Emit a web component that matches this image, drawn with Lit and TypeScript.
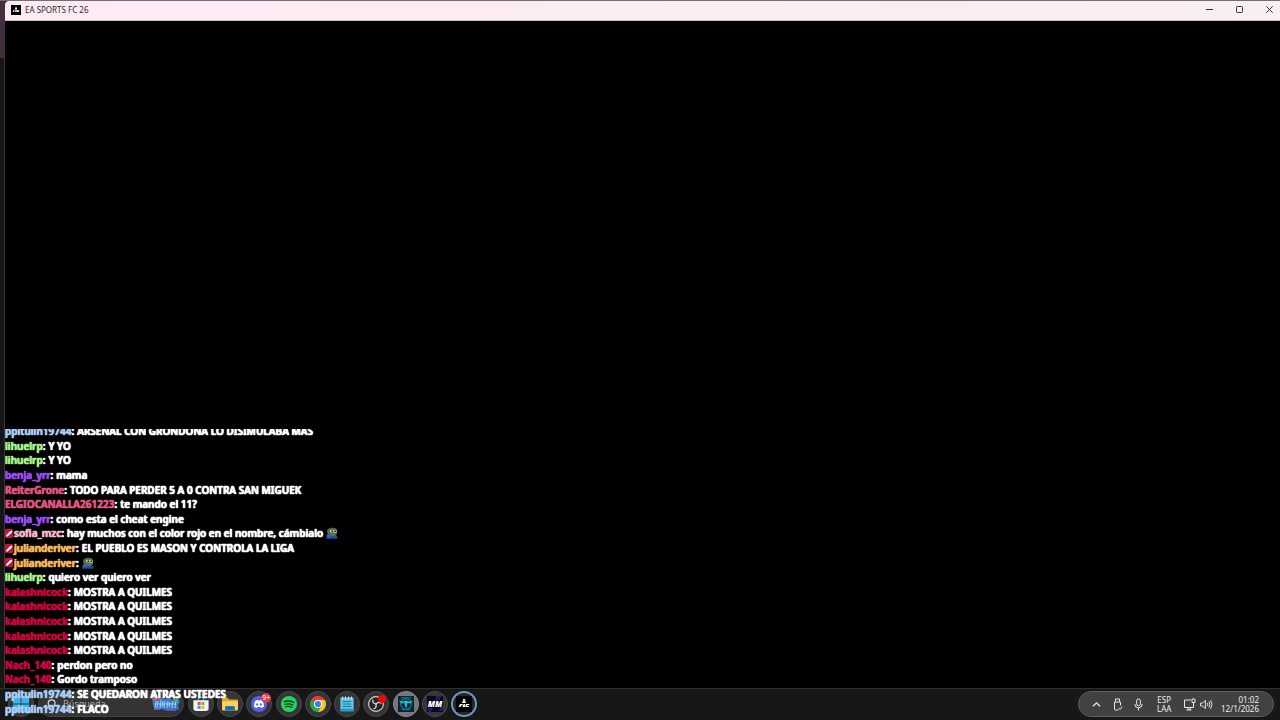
import { LitElement, html, css, svg, nothing } from "lit";
import { customElement } from "lit/decorators.js";

interface Message {
  user: string;
  color: string;
  text: string;
  badge?: boolean;
  emote?: boolean;
}

const BLUE = "#a9cdf5";
const GREEN = "#a4f58a";
const PURPLE = "#9a4df0";
const PINK = "#e0557f";
const RED = "#c9063f";
const ORANGE = "#f5b75c";

const spam: Message = { user: "kalashnicock", color: RED, text: "MOSTRA A QUILMES" };

const messages: Message[] = [
  { user: "ppitulin19744", color: BLUE, text: "ARSENAL CON GRONDONA LO DISIMULABA MAS" },
  { user: "lihuelrp", color: GREEN, text: "Y YO" },
  { user: "lihuelrp", color: GREEN, text: "Y YO" },
  { user: "benja_yrr", color: PURPLE, text: "mama" },
  { user: "ReiterGrone", color: PINK, text: "TODO PARA PERDER 5 A 0 CONTRA SAN MIGUEK" },
  { user: "ELGIOCANALLA261223", color: PINK, text: "te mando el 11?" },
  { user: "benja_yrr", color: PURPLE, text: "como esta el cheat engine" },
  { user: "sofia_mzc", color: "#f3b9c8", text: "hay muchos con el color rojo en el nombre, cámbialo", badge: true, emote: true },
  { user: "julianderiver", color: ORANGE, text: "EL PUEBLO ES MASON Y CONTROLA LA LIGA", badge: true },
  { user: "julianderiver", color: ORANGE, text: "", badge: true, emote: true },
  { user: "lihuelrp", color: GREEN, text: "quiero ver quiero ver" },
  spam, spam, spam, spam, spam,
  { user: "Nach_140", color: RED, text: "perdon pero no" },
  { user: "Nach_140", color: RED, text: "Gordo tramposo" },
  { user: "ppitulin19744", color: BLUE, text: "SE QUEDARON ATRAS USTEDES" },
  { user: "ppitulin19744", color: BLUE, text: "FLACO" },
];

const badge = html`<svg class="badge" viewBox="0 0 9 9" aria-hidden="true">
  <rect width="8" height="9" rx="1" fill="#c8103f" />
  <path d="M1 6.6 L5 2.2 L6.4 1.6 L7.2 2.4 L6.8 3.8 L2.6 7.6 L1.2 7.6 Z" fill="#fff" />
</svg>`;

const emote = html`<svg class="emote" viewBox="0 0 12 12" aria-hidden="true">
  <path d="M.5 11.8 Q0 8.4 2.6 7.6 L10 8.2 Q12 9.2 11.6 11.8 Z" fill="#164fa8" />
  <path d="M1 4.6 Q1.6 1 4.4 1.4 Q5.8 -.2 7.4 1.2 Q10.6 .2 11 3.6 Q12 7.8 8.4 9 Q2 10 1 4.6Z" fill="#4d7440" />
  <path d="M4 3.8 Q5.4 2 7.4 3.4 Q9.4 2 10.8 3.8 L10.2 5.4 Q8.8 6 7.4 5 Q5.4 6.2 4 4.8Z" fill="#d7dfd0" />
  <circle cx="6.2" cy="4.2" r=".9" fill="#141a14" /><circle cx="9.2" cy="4.2" r=".9" fill="#141a14" />
  <path d="M4.4 7.2 Q7.4 8.6 10.4 6.8" stroke="#9a5a42" stroke-width="1" fill="none" />
  <path d="M.6 8 Q2.6 6 4.6 8.4 L4 10.4 L1.2 10.2Z" fill="#2767c9" />
</svg>`;

const gameLogo = svg`
  <rect width="16" height="16" fill="#020202" />
  <path d="M6 7 L6.8 4.6 H9.2 L10 7 Z M7 3 H9.2 V4.2 H7Z" fill="#fff" />
  <path d="M2.6 11 L4 8 H6.8 L6.5 8.9 H5.2 L5 9.4 H6.2 L5.9 10.1 H4.7 L4.3 11Z M6.3 11 L7.6 8 H9.2 L9 11Z M9.4 11 L10 8 H13.6 L13.2 9 H11.4 L11.2 10 H13 L12.7 11Z" fill="#fff" />`;

const apps = [
  {
    name: "Microsoft Store", tone: "",
    icon: svg`<path d="M5.4 4.6 V3 Q5.4 1.4 7 1.4 H9 Q10.6 1.4 10.6 3 V4.6" fill="none" stroke="#38a9e6" stroke-width="1.3" />
      <path d="M.4 4.2 H15.6 V12.6 Q15.6 15 13.2 15 H2.8 Q.4 15 .4 12.6Z" fill="#f1f3f5" />
      <rect x="4.6" y="6" width="3" height="3" fill="#e8502f" /><rect x="8.4" y="6" width="3" height="3" fill="#78b43a" />
      <rect x="4.6" y="9.8" width="3" height="3" fill="#2b9de4" /><rect x="8.4" y="9.8" width="3" height="3" fill="#f5b51f" />`,
  },
  {
    name: "Explorador de archivos", tone: "",
    icon: svg`<path d="M0 2.8 Q0 1.6 1.2 1.6 H5.4 L7.2 3.4 H14.8 Q16 3.4 16 4.6 V9 H0Z" fill="#e2a32b" />
      <path d="M0 5.2 H16 V13.2 Q16 14.4 14.8 14.4 H1.2 Q0 14.4 0 13.2Z" fill="#fbd35c" />
      <path d="M3 14.4 V11.4 Q3 10 4.4 10 H11.6 Q13 10 13 11.4 V14.4Z" fill="#2277bb" />
      <path d="M5.2 12.2 H10.8" stroke="#155a94" stroke-width="1" />`,
  },
  {
    name: "Discord", tone: "", alert: true,
    icon: svg`<circle cx="8" cy="8" r="8" fill="#5661e8" />
      <path d="M4.6 4.6 Q6 3.9 6.8 3.9 L7.1 4.5 H8.9 L9.2 3.9 Q10.6 4.1 11.4 4.6 Q13.2 7.4 13 10.6 Q11.6 11.7 10.2 12 L9.6 10.9 H6.4 L5.8 12 Q4.4 11.7 3 10.6 Q2.8 7.4 4.6 4.6Z" fill="#fff" />
      <ellipse cx="6.2" cy="8.4" rx="1.1" ry="1.2" fill="#5661e8" /><ellipse cx="9.8" cy="8.4" rx="1.1" ry="1.2" fill="#5661e8" />`,
  },
  {
    name: "Spotify", tone: "",
    icon: svg`<circle cx="8" cy="8" r="8" fill="#1ed760" />
      <g fill="none" stroke="#10331c" stroke-linecap="round">
      <path d="M3.4 5.6 Q8.4 4.1 12.8 6.4" stroke-width="1.6" /><path d="M4 8.3 Q8.2 7.1 12 9" stroke-width="1.3" /><path d="M4.4 10.8 Q8 9.8 11.2 11.4" stroke-width="1.1" /></g>`,
  },
  {
    name: "Google Chrome", tone: "",
    icon: svg`<path d="M8 8 L1.07 4 A8 8 0 0 1 14.93 4 Z" fill="#e5402f" />
      <path d="M8 8 L14.93 4 A8 8 0 0 1 8 16 Z" fill="#fbc61c" />
      <path d="M8 8 L8 16 A8 8 0 0 1 1.07 4 Z" fill="#2da44e" />
      <path d="M8 4 H14.93 L11.5 10Z" fill="#fbc61c" /><path d="M1.07 4 L4.5 10 L8 8Z" fill="#2da44e" /><path d="M11.5 10 L8 16 L4.5 10Z" fill="#2da44e" />
      <circle cx="8" cy="8" r="4" fill="#fff" /><circle cx="8" cy="8" r="3.1" fill="#3b7de8" />`,
  },
  {
    name: "Bloc de notas", tone: "",
    icon: svg`<rect x="1.4" y="1.6" width="13.2" height="13.6" rx="1" fill="#63cbe4" />
      <path d="M1.4 12.6 H14.6 V15.2 H1.4Z" fill="#279bc4" />
      <path d="M3.6 .6 V3 M6.5 .6 V3 M9.5 .6 V3 M12.4 .6 V3" stroke="#d9f2f8" stroke-width="1" />
      <path d="M3.6 5.6 H12.4 M3.6 8 H12.4 M3.6 10.4 H12.4" stroke="#1b6f92" stroke-width="1" />`,
  },
  {
    name: "OBS Studio", tone: "", recording: true,
    icon: svg`<circle cx="8" cy="8" r="7.4" fill="#262428" stroke="#d6d6d6" stroke-width="1.1" />
      <g fill="none" stroke="#d6d6d6" stroke-width="1.3"><path d="M8 8 Q4.2 7.4 4.8 3.6" /><path d="M8 8 Q10.6 5 13.4 7.6" /><path d="M8 8 Q9 11.8 5.4 13" /></g>`,
  },
  {
    name: "Cheat Engine", tone: "open",
    icon: svg`<rect width="16" height="16" fill="#082733" />
      <circle cx="8" cy="8" r="5.4" fill="none" stroke="#167c8c" stroke-width="1.2" />
      <path d="M1 4.4 L5 5.6 L8 4.6 L11 5.6 L15 4.4 L12.6 7.4 L9.6 7 L8.6 11.6 H7.4 L6.4 7 L3.4 7.4Z" fill="#25b9c9" />
      <path d="M4 13.4 H12 M3 1.8 H13" stroke="#188294" stroke-width="1" />`,
  },
  {
    name: "Mod Manager", tone: "",
    icon: svg`<rect width="16" height="16" fill="#08051a" />
      <path d="M9 0 H15 L12 4 H8Z M1 12 H6 L4 16 H1Z M13 10 H16 V15 H12Z" fill="#2d1668" />
      <text x="8" y="11" text-anchor="middle" font-family="Open Sans, sans-serif" font-size="8" font-weight="800" font-style="italic" fill="#fff">MM</text>`,
  },
  { name: "EA SPORTS FC 26", tone: "active", icon: gameLogo },
];

@customElement("app-root")
export class AppRoot extends LitElement {
  static styles = css`
    :host {
      display: block;
      position: relative;
      height: 100vh;
      overflow: hidden;
      background: #000;
      color: #fff;
      font-family: "Noto Sans", "Open Sans", sans-serif;
    }
    * { box-sizing: border-box; }
    button { border: 0; padding: 0; margin: 0; background: none; color: inherit; font: inherit; }
    svg { display: block; }
    .desktop { display: grid; grid-template-rows: 1fr 32px; height: 100%; background: #151515; }
    .stage { display: grid; grid-template-columns: 5px 1fr; border-top: 1px solid #7c6a76; }
    .behind { background: linear-gradient(#43303f 0 57px, #161616 57px); border-right: 1px solid #3a363a; }
    .window { display: grid; grid-template-rows: 20px 1fr; border-top-left-radius: 4px; overflow: hidden; background: #000; }
    .titlebar { display: flex; align-items: center; gap: 4px; padding: 0 1px 2px 6px; background: linear-gradient(90deg, #fdebf3, #f9eef0); border-bottom: 1px solid #c9bfc3; color: #2b2629; }
    .logo { width: 10px; height: 10px; }
    .title { flex: 1; margin: 0; font-size: 8px; line-height: 12px; font-weight: 400; }
    .controls { display: flex; gap: 10px; }
    .controls button { display: grid; place-items: center; width: 20px; height: 16px; }
    .game { background: #000; }

    .taskbar { display: flex; align-items: center; padding: 0 6px 1px 8px; background: #171717; border-top: 1px solid #2e2e2e; }
    .round { display: grid; place-items: center; width: 26px; height: 26px; border-radius: 50%; background: #353436; border: 1px solid #4a494b; }
    .start svg { width: 16px; height: 16px; }
    .search { display: flex; align-items: center; gap: 7px; width: 146px; height: 26px; margin-left: 4px; padding: 0 3px 0 7px; border-radius: 13px; background: #343434; border: 1px solid #444; }
    .search input { flex: 1; min-width: 0; border: 0; padding: 0; background: none; color: #fff; font: 9px/12px "Noto Sans", sans-serif; outline: none; }
    .search input::placeholder { color: #a9a9a9; opacity: 1; }
    .apps { display: grid; grid-template-columns: repeat(10, 1fr); width: 293px; margin: 0 auto 0 2px; padding: 0; list-style: none; }
    .apps li { display: grid; place-items: center; }
    .apps .round { position: relative; }
    .apps svg { width: 16px; height: 16px; }
    .open { background: #77767c; border-color: #8a898e; }
    .active { background: #1b2733; border: 2px solid #7397b8; }
    .count { position: absolute; top: 1px; right: 0; display: grid; place-items: center; width: 10px; height: 10px; border-radius: 5px; background: #d83b50; color: #fff; font-size: 7px; line-height: 8px; }
    .rec { position: absolute; top: 3px; right: 2px; width: 8px; height: 8px; border-radius: 50%; background: #f00808; }

    .tray { display: flex; align-items: center; width: 196px; height: 26px; padding: 0 14px 0 11px; border: 1px solid #5e5e5e; border-radius: 13px; background: #414141; color: #eee; }
    .tray svg { width: 13px; height: 13px; fill: none; stroke: #e6e6e6; }
    .icons { display: flex; gap: 8px; }
    .lang { margin: 0 12px; text-align: center; }
    .net { display: flex; gap: 4px; }
    .small { font-size: 8px; line-height: 9px; }
    .clock { margin-left: auto; text-align: right; }
    .small span { display: block; }

    .chat { position: absolute; left: 5px; bottom: 4px; height: 287px; display: flex; align-items: flex-end; overflow: hidden; pointer-events: none; }
    .messages { display: grid; grid-template-rows: repeat(20, 1fr); height: 292px; margin: 0; padding: 0; list-style: none; font-size: 10px; line-height: 14px; font-weight: 600; white-space: nowrap; }
    .messages span { text-shadow: 0 0 1px currentColor, 0 0 1px currentColor, 0 0 1px currentColor; }
    .messages li { display: flex; align-items: center; gap: 3px; }
    .who { display: flex; align-items: center; }
    .badge { width: 9px; height: 9px; }
    .emote { width: 12px; height: 12px; }
  `;

  render() {
    return html`
      <div class="desktop">
        <div class="stage">
          <div class="behind"></div>
          <main class="window">
            <header class="titlebar">
              <svg class="logo" viewBox="0 0 16 16" aria-hidden="true">${gameLogo}</svg>
              <h1 class="title">EA SPORTS FC 26</h1>
              <div class="controls">
                <button aria-label="Minimizar"><svg width="7" height="7" viewBox="0 0 7 7"><path d="M0 3.5 H7" stroke="#333" /></svg></button>
                <button aria-label="Maximizar"><svg width="7" height="7" viewBox="0 0 7 7"><rect x=".5" y=".5" width="6" height="6" rx=".8" fill="none" stroke="#333" /></svg></button>
                <button aria-label="Cerrar"><svg width="7" height="7" viewBox="0 0 7 7"><path d="M.3 .3 L6.7 6.7 M6.7 .3 L.3 6.7" stroke="#333" /></svg></button>
              </div>
            </header>
            <section class="game"></section>
          </main>
        </div>
        <nav class="taskbar">
          <button class="round start" aria-label="Inicio">
            <svg viewBox="0 0 16 16"><path d="M0 0 H7.6 V7.6 H0Z M8.4 0 H16 V7.6 H8.4Z M0 8.4 H7.6 V16 H0Z M8.4 8.4 H16 V16 H8.4Z" fill="#35b5ee" /></svg>
          </button>
          <label class="search">
            <svg width="10" height="10" viewBox="0 0 10 10" fill="none" stroke="#ddd" stroke-width="1.2"><circle cx="5.6" cy="4.2" r="3.4" /><path d="M3.2 6.8 L.6 9.4" /></svg>
            <input type="search" placeholder="Búsqueda" aria-label="Búsqueda" />
            <svg width="28" height="16" viewBox="0 0 28 16" aria-hidden="true">
              <path d="M0 2 L4 1 L6 3 L10 1 L12 3 L18 2 L20 4 L25 2 L28 6 L26 9 L27 14 L22 13 L16 15 L10 13 L3 14 L1 9Z" fill="#3d78c4" />
              <path d="M1 1 L7 2 L5 5 L1 4Z" fill="#d8574b" /><path d="M20 1 L26 2 L27 6 L22 5Z" fill="#39a66b" />
              <path d="M4 5 L3 12 M6 5 L5 12 M9 4 L8 12 M11 5 L10 11 M13 5 L12 12 M16 5 L15 12 M18 6 L17 11 M21 5 L20 12 M24 5 L23 12 M3 8 H24" stroke="#9fcdf5" stroke-width="1" fill="none" />
              <path d="M2 13 H8 M18 14 H24" stroke="#7e5cc9" stroke-width="1.4" />
            </svg>
          </label>
          <ul class="apps">
            ${apps.map((app) => html`<li>
              <button class="round ${app.tone}" aria-label=${app.name}>
                <svg viewBox="0 0 16 16">${app.icon}</svg>
                ${app.alert ? html`<span class="count">9+</span>` : nothing}
                ${app.recording ? html`<span class="rec"></span>` : nothing}
              </button>
            </li>`)}
          </ul>
          <div class="tray">
            <div class="icons">
              <svg viewBox="0 0 13 13"><path d="M3 8.2 L6.5 4.8 L10 8.2" stroke-width="1.3" /></svg>
              <svg viewBox="0 0 13 13"><path d="M4.5 4 V1 H8.5 V4 M3.5 4 H9.5 V7.5 M3.5 4 V11 Q3.5 12 4.5 12 H7.5" /><path d="M7.6 9.8 L9 11.4 L11.4 8.6" /></svg>
              <svg viewBox="0 0 13 13"><rect x="4.6" y="1" width="3.8" height="6.8" rx="1.9" /><path d="M2.8 6 Q2.8 9.8 6.5 9.8 Q10.2 9.8 10.2 6 M6.5 9.8 V12.4" /></svg>
            </div>
            <div class="small lang"><span>ESP</span><span>LAA</span></div>
            <div class="net">
              <svg viewBox="0 0 13 13"><path d="M8 2 H1.5 V9.5 H10.5 V7 M3.5 12 H8.5 M5 9.5 V12 M7 9.5 V12 M9 1 H12 V4.5 H9Z M10.5 4.5 V7" /></svg>
              <svg viewBox="0 0 13 13"><path d="M.6 5 H2.6 L5.4 2.4 V10.6 L2.6 8 H.6Z M7.2 5 Q8.2 6.5 7.2 8 M8.9 3.6 Q10.8 6.5 8.9 9.4 M10.6 2.2 Q13.4 6.5 10.6 10.8" /></svg>
            </div>
            <div class="small clock"><span>01:02</span><span>12/1/2026</span></div>
          </div>
        </nav>
      </div>
      <aside class="chat">
        <ul class="messages">
          ${messages.map((m) => html`<li>
            <span class="who">${m.badge ? badge : nothing}<span style="color:${m.color}">${m.user}</span>:</span>
            ${m.text ? html`<span>${m.text}</span>` : nothing}
            ${m.emote ? emote : nothing}
          </li>`)}
        </ul>
      </aside>
    `;
  }
}
